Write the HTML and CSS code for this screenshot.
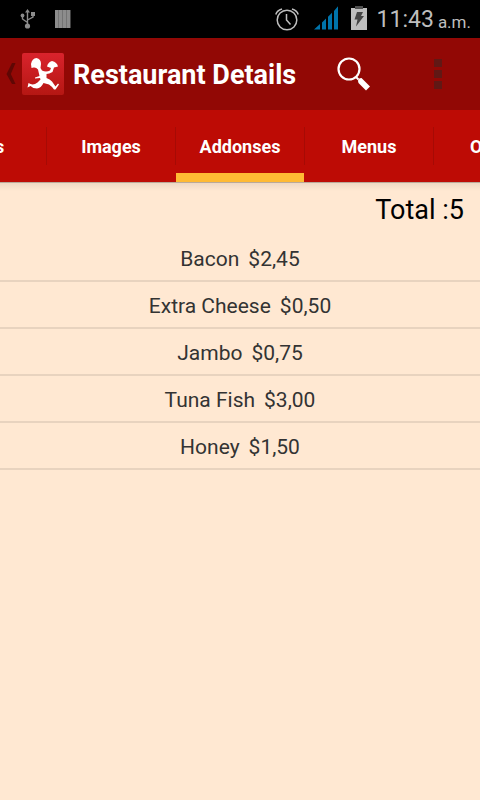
FILE: index.html
```html
<!DOCTYPE html>
<html lang="en">
<head>
<meta charset="utf-8">
<meta name="viewport" content="width=device-width, initial-scale=1">
<title>Restaurant Details</title>
<link rel="stylesheet" href="styles.css">
</head>
<body>
<div class="status">
  <svg class="usb" width="16" height="22" viewBox="0 0 16 22" fill="none" stroke="#8c8c8c" stroke-width="1.4"><path d="M7.5 18V3M7.5 14.500L2.500 11V7M7.500 12L13 9V5"/><g fill="#8c8c8c" stroke="none"><circle cx="7.500" cy="18" r="2.600"/><path d="M5 4.500L7.500 1L10 4.500z"/><circle cx="2.500" cy="7.500" r="1.900"/><path d="M11 4h4v4h-4z"/></g></svg>
  <svg class="bars" width="16" height="18" viewBox="0 0 16 18" fill="#8c8c8c"><path fill="#6a6a6a" d="M0 0h15.300v18H0z"/><path d="M0 0h3.300v18H0zM4 0h3.300v18H4zM8 0h3.300v18H8zM12 0h3.300v18H12z"/></svg>
  <svg class="alarm" width="24" height="24" viewBox="0 0 24 24" fill="none" stroke="#bebebe" stroke-width="1.500"><circle cx="12" cy="13" r="9.800"/><path d="M11.500 7V13L15.500 17.500M.8 7.500C1.500 5 3.500 3 7 2M23.200 7.500C22.500 5 20.500 3 17 2"/></svg>
  <svg class="signal" width="25" height="24" viewBox="0 0 25 24" fill="#0074ab"><path d="M0 23.500L6 18v5.500zM8 16.500l4-4v11H8zM14 10.800l4-4v16.700h-4zM20 5l4-4.800v23.300h-4z"/></svg>
  <svg class="battery" width="16" height="24" viewBox="0 0 16 24"><path fill="#505050" d="M4 0h8v3H4z"/><path fill="#bebebe" d="M0 2h16v22H0z"/><path fill="#505050" d="M4 0h8v3H4z"/><path fill="#444" d="M6 6h6l-2 4h3L5 20.500l1.500-7H3.500z"/></svg>
  <span class="clock">11:43</span><span class="meridiem">a.m.</span>
</div>
<header class="bar">
  <button class="back" type="button" aria-label="Back">
    <svg width="12" height="22" viewBox="0 0 12 22"><path d="M6 0h3.500L4.800 11l4.700 10H6L.5 11z" fill="#5f0704"/></svg>
    <svg width="44" height="44" viewBox="0 0 44 44"><defs><linearGradient id="tile" x2="0" y2="1"><stop stop-color="#d9232c"/><stop offset="1" stop-color="#b51713"/></linearGradient></defs><rect x="1" y="1" width="42" height="42" rx="2" fill="url(#tile)"/><path fill="#fff" d="M10.500 16L10 12Q11 6.500 15.500 6Q20 7 20 12L19.500 16L21 18.500Q25 20.500 29 18.500L30 16L26 14.500Q27 10 31 9Q36 10 37 14.500L33 15.500L31.500 20Q28 22 25.500 22L25.500 26Q29 27 31 29.500L34.500 34.500L37 31.500L38 32.500L34.500 37.500L33 37.500Q31 34.500 28 32.500L22.500 31Q20 36 16 36.500Q12 36.500 9.500 34L6.500 35.500L7.500 31Q12 34 16.500 30.500L19.500 27.500L19 26L14 26.500V25.500L18.500 24L17 17.500Q15 15 12.500 15.500z"/></svg>
  </button>
  <h1 class="title">Restaurant Details</h1>
  <button class="search" type="button" aria-label="Search">
    <svg width="34" height="34" viewBox="0 0 34 34"><circle cx="12" cy="12" r="10.500" fill="none" stroke="#fff" stroke-width="2.200"/><path d="M19 20l2.500 2.500" stroke="#fff" stroke-width="2"/><path d="M21 24q0-3 3.500-3L33 29.500L29 33.500L21.500 26z" fill="#fff"/></svg>
  </button>
  <button class="more" type="button" aria-label="More options">
    <svg width="8" height="30" viewBox="0 0 8 30" fill="#611815"><path d="M0 0h8v8H0zM0 11h8v8H0zM0 22h8v8H0z"/></svg>
  </button>
</header>
<nav class="tabs">
  <a class="tab first" href="#">s</a>
  <a class="tab" href="#">Images</a>
  <a class="tab active" href="#" aria-current="page">Addonses</a>
  <a class="tab" href="#">Menus</a>
  <a class="tab last" href="#">O</a>
</nav>
<main class="content">
  <p class="total">Total :5</p>
  <ul class="list">
    <li><span>Bacon</span><span>$2,45</span></li>
    <li><span>Extra Cheese</span><span>$0,50</span></li>
    <li><span>Jambo</span><span>$0,75</span></li>
    <li><span>Tuna Fish</span><span>$3,00</span></li>
    <li><span>Honey</span><span>$1,50</span></li>
  </ul>
</main>
</body>
</html>
```
FILE: styles.css
```css
* { box-sizing: border-box; }
body {
  margin: 0;
  min-height: 100vh;
  background: #ffe8d2;
  font-family: Roboto, sans-serif;
  overflow-x: hidden;
}
button {
  padding: 0;
  border: 0;
  background: none;
  display: flex;
  align-items: center;
}
svg { display: block; flex: none; }
.status {
  display: flex;
  align-items: center;
  height: 38px;
  padding: 0 9px 0 20px;
  background: #000;
  color: #bebebe;
}
.bars { margin-left: 19px; }
.alarm { margin-left: auto; }
.signal { margin-left: 15px; margin-bottom: 2px; }
.battery { margin-left: 12px; margin-bottom: 2px; }
.clock { margin-left: 10px; font-size: 23px; line-height: 38px; padding-top: 2px; }
.meridiem { margin-left: 4px; font-size: 17px; line-height: 38px; padding-top: 6px; }
.bar {
  display: flex;
  align-items: center;
  height: 72px;
  padding: 0 38px 0 6px;
  background: #920805;
}
.back { gap: 3px; }
.title {
  margin: 0 0 0 8px;
  padding-top: 2px;
  color: #fff;
  font-size: 27px;
  font-weight: 700;
  line-height: 36px;
  white-space: nowrap;
}
.search { margin-left: 41px; }
.more { margin-left: auto; }
.tabs {
  display: flex;
  height: 72px;
  background: #bd0b05;
  overflow: hidden;
}
.tab {
  display: flex;
  flex: 1;
  align-items: center;
  justify-content: center;
  min-width: 0;
  border: solid transparent;
  border-width: 0 1px 0 0;
  border-image: linear-gradient(transparent 18px, #a60a05 18px, #a60a05 54px, transparent 54px) 1;
  color: #fff;
  font-size: 18px;
  font-weight: 700;
  text-decoration: none;
}
.active { background: linear-gradient(#ffba34, #ffba34) bottom / 100% 9px no-repeat padding-box; }
.first { flex: 0 0 47px; justify-content: flex-start; text-indent: -5px; }
.last { flex: 0 0 46px; justify-content: flex-start; padding-left: 36px; border: 0; }
.content {
  border-top: 1px solid #b9a999;
  background: linear-gradient(#eed8c3, #ffe8d2 8px);
}
.total {
  margin: 0;
  padding: 9px 16px 7px 0;
  font-size: 27px;
  line-height: 36px;
  color: #000;
  text-align: right;
}
.list { margin: 0; padding: 0; list-style: none; }
.list li {
  display: flex;
  justify-content: center;
  gap: 9px;
  height: 47px;
  border-bottom: 2px solid #e8d3bf;
  color: #333;
  font-size: 21px;
  line-height: 48px;
}
```
